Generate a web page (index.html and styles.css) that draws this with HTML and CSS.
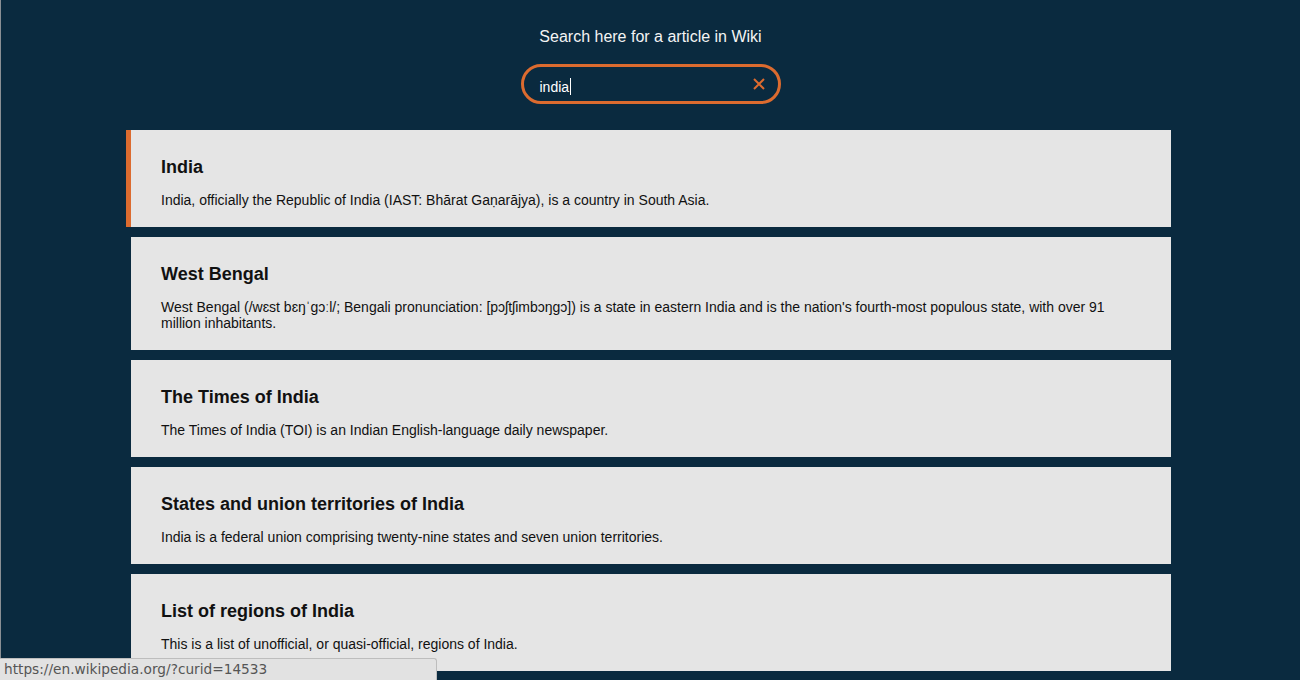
FILE: index.html
```html
<!DOCTYPE html>
<html lang="en">
<head>
<meta charset="utf-8">
<title>Wiki Search</title>
<link rel="stylesheet" href="styles.css">
</head>
<body>
<header class="top">
  <h1 class="title">Search here for a article in Wiki</h1>
  <div class="search">
    <div class="search-text">india<span class="caret"></span></div>
    <svg class="clear" width="12" height="12" viewBox="0 0 12 12"><path d="M1 1L11 11M11 1L1 11" stroke="#dc6b2f" stroke-width="2" fill="none"/></svg>
  </div>
</header>
<main class="results">
  <a class="card active" href="#">
    <h3>India</h3>
    <p>India, officially the Republic of India (IAST: Bhārat Gaṇarājya), is a country in South Asia.</p>
  </a>
  <a class="card" href="#">
    <h3>West Bengal</h3>
    <p>West Bengal (/wɛst bɛŋˈɡɔːl/; Bengali pronunciation: [pɔʃtʃimbɔŋɡɔ]) is a state in eastern India and is the nation's fourth-most populous state, with over 91 million inhabitants.</p>
  </a>
  <a class="card" href="#">
    <h3>The Times of India</h3>
    <p>The Times of India (TOI) is an Indian English-language daily newspaper.</p>
  </a>
  <a class="card" href="#">
    <h3>States and union territories of India</h3>
    <p>India is a federal union comprising twenty-nine states and seven union territories.</p>
  </a>
  <a class="card" href="#">
    <h3>List of regions of India</h3>
    <p>This is a list of unofficial, or quasi-official, regions of India.</p>
  </a>
</main>
<div class="status">https://en.wikipedia.org/?curid=14533</div>
</body>
</html>
```
FILE: styles.css
```css
html, body {
  margin: 0;
  padding: 0;
}
body {
  background: #0a2a3f;
  font-family: "Liberation Sans", Arial, sans-serif;
  border-left: 1px solid #8a8f94;
  min-height: 680px;
  box-sizing: border-box;
}
.top {
  display: flex;
  flex-direction: column;
  align-items: center;
  padding-top: 28px;
}
.title {
  margin: 0;
  font-size: 16px;
  line-height: 18px;
  font-weight: normal;
  color: #f4f4f4;
}
.search {
  margin-top: 18px;
  width: 260px;
  height: 40px;
  box-sizing: border-box;
  border: 3px solid #dc6b2f;
  border-radius: 20px;
  display: flex;
  align-items: center;
  padding: 0 13px 0 16px;
}
.search-text {
  flex: 1;
  color: #ffffff;
  font-size: 14px;
  line-height: 16px;
  padding-top: 5px;
  display: flex;
  align-items: center;
}
.caret {
  display: inline-block;
  width: 1px;
  height: 17px;
  background: #ffffff;
  margin-left: 1px;
}
.clear {
  display: block;
  margin-top: 0;
}
.results {
  width: 1040px;
  margin: 26px 0 0 calc(50% - 519.5px);
  display: flex;
  flex-direction: column;
  gap: 10px;
}
.card {
  display: block;
  background: #e5e5e5;
  padding: 27px 30px 19px;
  color: #111;
  text-decoration: none;
}
.card.active {
  border-left: 5px solid #dc6b2f;
  margin-left: -5px;
}
.card h3 {
  margin: 0 0 14px;
  font-size: 18px;
  line-height: 21px;
  font-weight: bold;
  color: #111;
}
.card p {
  margin: 0;
  font-size: 14px;
  line-height: 16px;
  color: #111;
}
.status {
  position: fixed;
  left: 0;
  bottom: 0;
  width: 437px;
  height: 22px;
  box-sizing: border-box;
  background: #e2e2e2;
  border: 1px solid #bdbdbd;
  border-left: none;
  border-bottom: none;
  border-top-right-radius: 3px;
  padding: 2px 0 0 4px;
  font-family: "DejaVu Sans", sans-serif;
  font-size: 13.7px;
  line-height: 17px;
  color: #555;
  white-space: nowrap;
}
```
